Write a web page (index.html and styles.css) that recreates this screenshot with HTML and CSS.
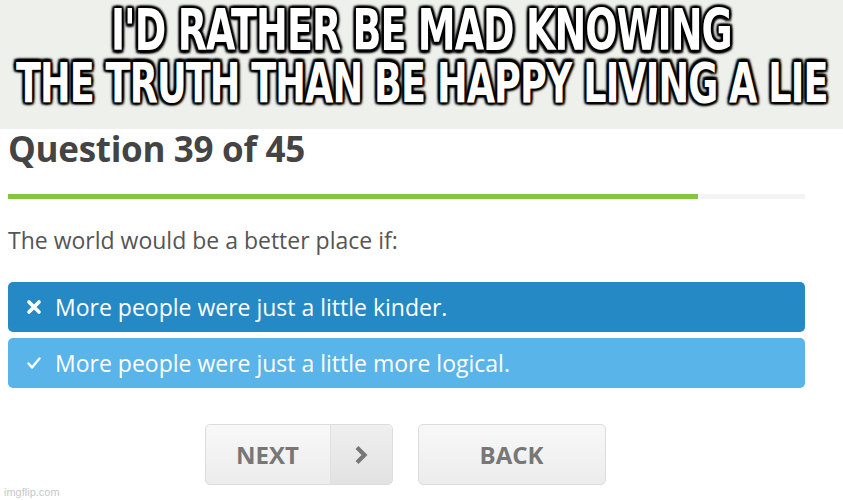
FILE: index.html
```html
<!DOCTYPE html>
<html lang="en">
<head>
    <meta charset="UTF-8">
    <title>Question 39 of 45</title>
    <link rel="stylesheet" href="styles.css">
</head>
<body>

    <div class="meme-top">
        <div class="caption">I'D RATHER BE MAD KNOWING</div>
        <div class="caption caption-long">THE TRUTH THAN BE HAPPY LIVING A LIE</div>
    </div>

    <div class="quiz">
        <h1>Question 39 of 45</h1>

        <div class="progress">
            <div class="progress-fill" style="width: 86.6%"></div>
        </div>

        <p class="prompt">The world would be a better place if:</p>

        <div class="answer answer-dark">
            <svg class="answer-icon" viewBox="0 0 16 16" width="16" height="16">
                <path d="M3 3 L13 13 M13 3 L3 13" stroke="#fff" stroke-width="3.6" stroke-linecap="round"/>
            </svg>
            More people were just a little kinder.
        </div>
        <div class="answer answer-light">
            <svg class="answer-icon" viewBox="0 0 16 16" width="16" height="16">
                <path d="M2.5 8.5 L6 12.5 L13.5 3.5" stroke="#fff" stroke-width="2.4" fill="none" stroke-linecap="round" stroke-linejoin="round"/>
            </svg>
            More people were just a little more logical.
        </div>

        <div class="buttons">
            <button class="btn btn-next">
                <span class="btn-label">NEXT</span>
                <span class="btn-arrow">
                    <svg viewBox="0 0 16 20" width="16" height="20">
                        <path d="M4 2.5 L11.5 10 L4 17.5" stroke="#777" stroke-width="4.2" fill="none"/>
                    </svg>
                </span>
            </button>
            <button class="btn btn-back">BACK</button>
        </div>
    </div>

    <div class="watermark">imgflip.com</div>

</body>
</html>
```

FILE: styles.css
```css
body {
    margin: 0;
    padding: 0;
    background-color: #fff;
    font-family: "Open Sans", Arial, sans-serif;
    width: 843px;
    height: 500px;
    overflow: hidden;
    position: relative;
}
.meme-top {
    background-color: #eef0eb;
    height: 129px;
    padding-top: 11px;
    box-sizing: border-box;
    display: flex;
    flex-direction: column;
    align-items: center;
    gap: 12px;
    overflow: hidden;
}
.caption {
    font-family: "Liberation Sans Narrow", "DejaVu Sans Condensed", sans-serif;
    font-weight: bold;
    font-size: 44px;
    line-height: 40px;
    color: #fff;
    letter-spacing: -1px;
    white-space: nowrap;
    transform: scale(0.96, 1.28);
    text-shadow: 2px 2px 2px #000, -2px -2px 2px #000, 2px -2px 2px #000, -2px 2px 2px #000,
        0 2px 2px #000, 0 -2px 2px #000, 2px 0 2px #000, -2px 0 2px #000;
}
.caption-long {
    transform: scale(0.925, 1.26);
}
.quiz {
    width: 797px;
    margin-left: 8px;
}
h1 {
    font-size: 35px;
    font-weight: bold;
    color: #444;
    margin: 0;
    line-height: 40px;
    letter-spacing: -0.3px;
}
.progress {
    height: 5px;
    background-color: #f4f4f4;
    margin-top: 25px;
}
.progress-fill {
    height: 100%;
    background-color: #87c242;
}
.prompt {
    font-size: 23px;
    color: #555;
    margin: 27px 0 0 0;
    line-height: 28px;
}
.answer {
    display: flex;
    align-items: center;
    height: 50px;
    border-radius: 5px;
    color: #fff;
    font-size: 23px;
    padding-left: 18px;
    box-sizing: border-box;
}
.answer-dark {
    background-color: #2589c6;
    margin-top: 28px;
}
.answer-light {
    background-color: #59b4ea;
    margin-top: 6px;
}
.answer-icon {
    margin-right: 13px;
    flex-shrink: 0;
}
.buttons {
    display: flex;
    justify-content: center;
    gap: 25px;
    margin-top: 36px;
    padding-right: 3px;
}
.btn {
    display: flex;
    align-items: center;
    justify-content: center;
    height: 61px;
    width: 188px;
    padding: 0;
    border: 1px solid #dcdcdc;
    border-radius: 5px;
    background: linear-gradient(#f8f8f8, #ececec);
    font-family: "Open Sans", Arial, sans-serif;
    font-weight: bold;
    font-size: 24px;
    color: #777;
    overflow: hidden;
}
.btn-next {
    justify-content: flex-start;
}
.btn-label {
    width: 124px;
    text-align: center;
}
.btn-arrow {
    flex: 1;
    height: 100%;
    display: flex;
    align-items: center;
    justify-content: center;
    background: linear-gradient(#efefef, #e2e2e2);
    border-left: 1px solid #e0e0e0;
}
.watermark {
    position: absolute;
    left: 4px;
    bottom: 2px;
    font-family: "Liberation Sans", Arial, sans-serif;
    font-size: 11px;
    color: #c8c8c8;
}
```
